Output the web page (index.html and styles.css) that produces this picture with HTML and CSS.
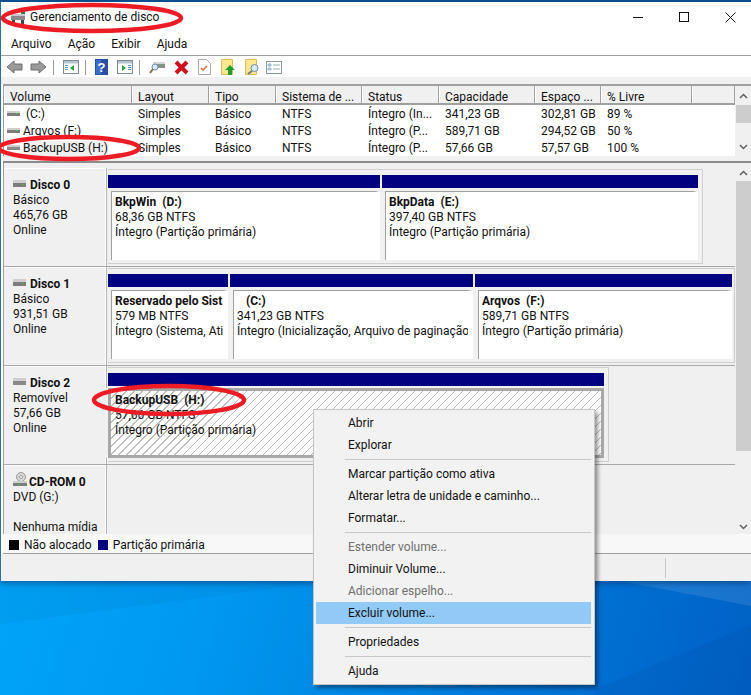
FILE: index.html
```html
<!DOCTYPE html>
<html lang="pt-BR">
<head>
<meta charset="utf-8">
<title>Gerenciamento de disco</title>
<link rel="stylesheet" href="styles.css">
</head>
<body>
<svg class="wallpaper" width="751" height="115" viewBox="0 580 751 115">
  <path d="M0 624L330 581H0z" fill="#005f9f" opacity=".08"/>
  <path d="M620 581L751 606V581z" fill="#ffffff" opacity=".1"/>
  <path d="M594 690L751 625V695H594z" fill="#00459f" opacity=".12"/>
</svg>
<div class="window">
  <header class="titlebar">
    <svg class="app-icon" width="16" height="16" viewBox="0 0 16 16"><rect x="1" y="5" width="14" height="6" fill="#8a8a8a"/><rect x="1" y="5" width="14" height="2" fill="#c8c8c8"/><rect x="2" y="11" width="3" height="4" fill="#444"/><rect x="11" y="11" width="3" height="4" fill="#444"/><rect x="11" y="2" width="4" height="3" fill="#2f7d32"/></svg>
    <span class="title">Gerenciamento de disco</span>
    <div class="controls">
      <svg width="11" height="11" viewBox="0 0 11 11"><path d="M0 5.500h10" stroke="#111" fill="none"/></svg>
      <svg width="11" height="11" viewBox="0 0 11 11"><rect x=".5" y=".5" width="9" height="9" stroke="#111" fill="none"/></svg>
      <svg width="11" height="11" viewBox="0 0 11 11"><path d="M.5.500l10 10M10.500.500l-10 10" stroke="#111" fill="none"/></svg>
    </div>
  </header>
  <nav class="menubar"><span>Arquivo</span><span>Ação</span><span>Exibir</span><span>Ajuda</span></nav>
  <div class="toolbar">
    <svg class="tool" width="17" height="16" viewBox="0 0 17 16"><path d="M1 8l7-6v3h8v6H8v3z" fill="#9a9a9a" stroke="#6e6e6e"/></svg>
    <svg class="tool gap7" width="17" height="16" viewBox="0 0 17 16"><path d="M16 8L9 2v3H1v6h8v3z" fill="#9a9a9a" stroke="#6e6e6e"/></svg>
    <i class="tsep"></i>
    <svg class="tool" width="16" height="14" viewBox="0 0 16 14"><rect x=".5" y=".5" width="15" height="13" fill="#fff" stroke="#7c8a96"/><rect x="1" y="1" width="14" height="2.500" fill="#b5c3cf"/><path d="M2 5h3v1H2zM2 7h3v1H2zM2 9h3v1H2z" fill="#5a93b8"/><path d="M11 5v6L7 8z" fill="#2fa03a"/></svg>
    <i class="tsep"></i>
    <svg class="tool" width="14" height="16" viewBox="0 0 14 16"><rect width="13" height="16" fill="#2a4fa8"/><rect x="1" y="1" width="5" height="14" fill="#3f6fd0"/><text x="6.500" y="13" text-anchor="middle" font-family="Liberation Sans" font-weight="700" font-size="13" fill="#fff">?</text></svg>
    <svg class="tool gap4" width="16" height="14" viewBox="0 0 16 14"><rect x=".5" y=".5" width="15" height="13" fill="#fff" stroke="#7c8a96"/><rect x="1" y="1" width="14" height="2.500" fill="#b5c3cf"/><path d="M11 5h3v1h-3zM11 7h3v1h-3zM11 9h3v1h-3z" fill="#5a93b8"/><path d="M5 5v6l4-3z" fill="#2fa03a"/></svg>
    <i class="tsep"></i>
    <svg class="tool" width="16" height="16" viewBox="0 0 16 16"><rect x="4" y="3" width="12" height="6" fill="#8d8d8d"/><rect x="4" y="3" width="12" height="2" fill="#d6d6d6"/><rect x="12" y="6" width="2" height="1" fill="#3c3"/><circle cx="6" cy="8" r="3" fill="#d7ecfa" stroke="#6f8fa8"/><path d="M4 10l-3 4" stroke="#8a6b4a" stroke-width="2"/></svg>
    <svg class="tool gap8" width="15" height="15" viewBox="0 0 15 15"><path d="M2 2l11 11M13 2L2 13" stroke="#d3101a" stroke-width="4"/></svg>
    <svg class="tool gap9" width="13" height="16" viewBox="0 0 13 16"><path d="M.5.500h8l4 4v11H.5z" fill="#fdfdfd" stroke="#a9a9a9"/><path d="M3 9l2 2 4-4" stroke="#e4672b" stroke-width="1.500" fill="none"/></svg>
    <svg class="tool gap10" width="14" height="16" viewBox="0 0 14 16"><path d="M.5.500h11v15H.5z" fill="#fde68e" stroke="#d9bd62"/><path d="M9 6l5 5h-3v5H7v-5H4z" fill="#1f9e2c"/></svg>
    <svg class="tool gap10" width="14" height="16" viewBox="0 0 14 16"><path d="M.5.500h11v15H.5z" fill="#fde68e" stroke="#d9bd62"/><circle cx="9.500" cy="9" r="3.500" fill="#d9eefb" stroke="#6a8ca6"/><path d="M7 12l-4 3" stroke="#7a7a7a" stroke-width="2"/></svg>
    <svg class="tool gap7" width="16" height="13" viewBox="0 0 16 13"><rect x=".5" y=".5" width="15" height="12" fill="#fff" stroke="#8c97a2"/><path d="M2 3h3v2H2zM2 7h3v2H2z" fill="#d8e7f3" stroke="#3b78ae" stroke-width=".5"/><path d="M7 4h7M7 8h7" stroke="#9aa"/></svg>
  </div>
  <div class="band"></div>

  <section class="volumes">
    <div class="table">
      <div class="row head"><span>Volume</span><span>Layout</span><span>Tipo</span><span>Sistema de ...</span><span>Status</span><span>Capacidade</span><span>Espaço ...</span><span>% Livre</span><span></span></div>
      <div class="row"><span class="vol"><svg class="hdd" width="14" height="7" viewBox="0 0 14 7"><rect y="1" width="13" height="5" fill="#7d7d7d"/><rect y="1" width="13" height="2" fill="#cfcfcf"/><rect x="9" y="3" width="2" height="1" fill="#3c3"/></svg><b> (C:)</b></span><span>Simples</span><span>Básico</span><span>NTFS</span><span>Íntegro (In...</span><span>341,23 GB</span><span>302,81 GB</span><span>89 %</span><span></span></div>
      <div class="row"><span class="vol"><svg class="hdd" width="14" height="7" viewBox="0 0 14 7"><rect y="1" width="13" height="5" fill="#7d7d7d"/><rect y="1" width="13" height="2" fill="#cfcfcf"/><rect x="9" y="3" width="2" height="1" fill="#3c3"/></svg><b>Arqvos (F:)</b></span><span>Simples</span><span>Básico</span><span>NTFS</span><span>Íntegro (P...</span><span>589,71 GB</span><span>294,52 GB</span><span>50 %</span><span></span></div>
      <div class="row"><span class="vol sel"><svg class="hdd" width="14" height="7" viewBox="0 0 14 7"><rect y="1" width="13" height="5" fill="#8a8a8a"/><rect y="1" width="13" height="2" fill="#cfcfcf"/></svg><b>BackupUSB (H:)</b></span><span>Simples</span><span>Básico</span><span>NTFS</span><span>Íntegro (P...</span><span>57,66 GB</span><span>57,57 GB</span><span>100 %</span><span></span></div>
    </div>
    <div class="scroll">
      <svg class="arrow" width="9" height="6" viewBox="0 0 9 6"><path d="M1 5l3.500-3.500L8 5" stroke="#606060" stroke-width="1.500" fill="none"/></svg>
      <div class="thumb list-thumb"></div>
      <svg class="arrow end" width="9" height="6" viewBox="0 0 9 6"><path d="M1 1l3.500 3.500L8 1" stroke="#606060" stroke-width="1.500" fill="none"/></svg>
    </div>
  </section>
  <div class="splitter"></div>

  <section class="graph">
    <div class="disks">
      <div class="disk">
        <div class="label"><h3><svg class="hdd" width="14" height="9" viewBox="0 0 14 9"><rect y="1" width="13" height="7" fill="#7d7d7d"/><rect y="1" width="13" height="3" fill="#cfcfcf"/><rect x="9" y="5" width="2" height="1" fill="#3c3"/></svg>Disco 0</h3><p>Básico</p><p>465,76 GB</p><p>Online</p></div>
        <div class="area">
          <div class="frame w595">
            <div class="part w273"><div class="bar"></div><div class="body"><strong>BkpWin  (D:)</strong><p>68,36 GB NTFS</p><p>Íntegro (Partição primária)</p></div></div>
            <div class="part w316"><div class="bar"></div><div class="body"><strong>BkpData  (E:)</strong><p>397,40 GB NTFS</p><p>Íntegro (Partição primária)</p></div></div>
          </div>
        </div>
      </div>
      <div class="disk">
        <div class="label"><h3><svg class="hdd" width="14" height="9" viewBox="0 0 14 9"><rect y="1" width="13" height="7" fill="#7d7d7d"/><rect y="1" width="13" height="3" fill="#cfcfcf"/><rect x="9" y="5" width="2" height="1" fill="#3c3"/></svg>Disco 1</h3><p>Básico</p><p>931,51 GB</p><p>Online</p></div>
        <div class="area">
          <div class="frame wfull">
            <div class="part w121"><div class="bar"></div><div class="body"><strong>Reservado pelo Sist</strong><p>579 MB NTFS</p><p>Íntegro (Sistema, Ati</p></div></div>
            <div class="part w244"><div class="bar"></div><div class="body"><strong>   (C:)</strong><p>341,23 GB NTFS</p><p>Íntegro (Inicialização, Arquivo de paginação</p></div></div>
            <div class="part w257"><div class="bar"></div><div class="body"><strong>Arqvos  (F:)</strong><p>589,71 GB NTFS</p><p>Íntegro (Partição primária)</p></div></div>
          </div>
        </div>
      </div>
      <div class="disk">
        <div class="label"><h3><svg class="hdd" width="14" height="9" viewBox="0 0 14 9"><rect y="1" width="13" height="7" fill="#8a8a8a"/><rect y="1" width="13" height="3" fill="#cfcfcf"/></svg>Disco 2</h3><p>Removível</p><p>57,66 GB</p><p>Online</p></div>
        <div class="area">
          <div class="frame w501">
            <div class="part w496"><div class="bar"></div><div class="body hatch"><strong>BackupUSB  (H:)</strong><p>57,66 GB NTFS</p><p>Íntegro (Partição primária)</p></div></div>
          </div>
        </div>
      </div>
      <div class="disk cd">
        <div class="label"><h3><svg class="hdd cdicon" width="15" height="15" viewBox="0 0 15 15"><circle cx="8" cy="5" r="4.500" fill="#d8d8d8" stroke="#9a9a9a"/><circle cx="8" cy="5" r="1.500" fill="#fff" stroke="#999"/><rect y="9" width="14" height="5" fill="#7d7d7d"/><rect y="9" width="14" height="2" fill="#cfcfcf"/><rect x="5" y="12" width="2" height="1" fill="#3c3"/></svg>CD-ROM 0</h3><p>DVD (G:)</p><p class="blank"></p><p>Nenhuma mídia</p></div>
        <div class="area"></div>
      </div>
    </div>
    <div class="scroll">
      <svg class="arrow" width="9" height="6" viewBox="0 0 9 6"><path d="M1 5l3.500-3.500L8 5" stroke="#606060" stroke-width="1.500" fill="none"/></svg>
      <div class="thumb graph-thumb"></div>
      <svg class="arrow end low" width="9" height="6" viewBox="0 0 9 6"><path d="M1 1l3.500 3.500L8 1" stroke="#606060" stroke-width="1.500" fill="none"/></svg>
    </div>
  </section>
  <div class="legend"><i class="sw black"></i><span>Não alocado</span><i class="sw navy"></i><span>Partição primária</span></div>
  <footer class="status"><i></i></footer>
</div>

<ul class="menu">
  <li>Abrir</li><li>Explorar</li><li class="sep"></li>
  <li>Marcar partição como ativa</li><li>Alterar letra de unidade e caminho...</li><li>Formatar...</li><li class="sep"></li>
  <li class="off">Estender volume...</li><li>Diminuir Volume...</li><li class="off">Adicionar espelho...</li><li class="hot">Excluir volume...</li><li class="sep"></li>
  <li>Propriedades</li><li class="sep"></li>
  <li>Ajuda</li>
</ul>

<svg class="marks" width="751" height="695" viewBox="0 0 751 695">
  <ellipse cx="92" cy="18" rx="89" ry="13" />
  <ellipse cx="69" cy="148" rx="70" ry="11" />
  <ellipse cx="169" cy="400" rx="75" ry="14" />
</svg>
</body>
</html>
```

FILE: styles.css
```css
* { box-sizing: border-box; }
html, body { margin: 0; height: 100%; }
body {
  position: relative;
  width: 751px;
  height: 695px;
  overflow: hidden;
  font: 12px/17px Roboto, "Noto Sans", sans-serif;
  color: #111;
  background: linear-gradient(108deg, #00aeff 0%, #0098f0 42%, #0074d6 78%, #0060c4 100%);
}
p, h3, ul { margin: 0; padding: 0; }
.wallpaper { position: absolute; left: 0; top: 580px; }
.window {
  position: relative;
  width: 751px;
  height: 581px;
  background: #fff;
  border-top: 2px solid #0b4f8e;
  border-left: 1px solid #2d6f9f;
  box-shadow: 0 2px 6px rgba(0, 40, 90, .55);
  display: flex;
  flex-direction: column;
}
.titlebar { height: 30px; display: flex; align-items: center; padding-left: 9px; flex: none; }
.app-icon { margin-right: 4px; }
.title { font-size: 12px; }
.controls { margin-left: auto; display: flex; gap: 35px; padding-right: 15px; align-items: center; }
.menubar { height: 22px; flex: none; display: flex; gap: 16px; padding: 1px 0 0 10px; align-items: center; border-bottom: 1px solid #a0a0a0; box-sizing: content-box; }
.toolbar { height: 21px; flex: none; display: flex; align-items: center; padding: 1px 0 0 5px; background: #fff; }
.tsep { width: 1px; height: 15px; background: #9a9a9a; margin: 0 9px 0 6px; }
.gap4 { margin-left: 8px; }
.gap7 { margin-left: 7px; }
.gap8 { margin-left: 9px; }
.gap9 { margin-left: 9px; }
.gap10 { margin-left: 10px; }
.band { height: 7px; flex: none; background: #f0f0f0; }
.volumes { height: 72px; flex: none; display: flex; border-top: 2px solid #a0a0a0; margin-left: 2px; background: #fff; border-left: 1px solid #a0a0a0; }
.table { width: 731px; flex: none; }
.row { display: grid; grid-template-columns: 128px 77px 67px 86px 77px 96px 66px 91px 43px; height: 17px; }
.row > span { padding-left: 6px; white-space: pre; overflow: hidden; line-height: 19px; }
.head { height: 19px; background: #f0f0f0; border-bottom: 2px solid #a0a0a0; }
.row.head > span { border-right: 1px solid #a0a0a0; box-shadow: inset 1px 0 #fff; line-height: 22px; }
.vol { display: flex; align-items: center; padding-left: 3px !important; }
.vol b { font-weight: 400; line-height: 15px; margin-top: 2px; }
.hdd { flex: none; margin-right: 2px; }
.sel b { background: #f0f0f0; }
.scroll { width: 16px; flex: none; background: #f0f0f0; position: relative; display: flex; flex-direction: column; align-items: center; padding-top: 7px; }
.arrow { flex: none; }
.end { margin-top: auto; margin-bottom: 6px; }
.low { margin-bottom: 4px; }
.thumb { width: 15px; background: #cdcdcd; margin-top: 6px; flex: none; }
.list-thumb { height: 18px; }
.graph-thumb { height: 270px; margin-top: 5px; }
.splitter { height: 7px; flex: none; margin-left: 2px; background: #f0f0f0; border-bottom: 2px solid #8c8c8c; }
.graph { height: 371px; flex: none; display: flex; margin-left: 2px; background: #f0f0f0; border-left: 1px solid #a0a0a0; }
.disks { width: 731px; flex: none; padding-top: 5px; }
.disk { display: flex; height: 99px; border-bottom: 1px solid #a8a8a8; }
.disk.cd { height: 69px; border-bottom: 0; }
.label { width: 102px; flex: none; padding: 8px 0 0 9px; border-top: 1px solid #fff; border-right: 1px solid #fff; }
.label h3 { font-size: 12px; font-weight: 700; display: flex; align-items: center; height: 17px; line-height: 17px; margin-bottom: -1px; }
.label .hdd { margin: -5px 3px 0 0; }
.label p { line-height: 15px; }
.label .blank { height: 15px; }
.label .cdicon { margin: -6px 1px 0 0; }
.area { flex: 1; border-left: 1px solid #b4b4b4; padding: 1px 0 0 1px; min-width: 0; }
.frame { height: 95px; display: flex; gap: 2px; padding: 5px 0 0 0; border: 1px solid #cfcfcf; border-left: 0; }
.w595 { width: 595px; }
.wfull { width: 627px; }
.w501 { width: 501px; }
.part { display: flex; flex-direction: column; flex: none; height: 85px; }
.w273 { width: 272px; }
.w316 { width: 316px; }
.w121 { width: 120px; }
.w244 { width: 243px; }
.w257 { width: 257px; }
.w496 { width: 496px; }
.bar { height: 13px; background: #000080; flex: none; }
.body { flex: 1; margin: 3px 0 0 3px; border-top: 1px solid #a0a0a0; border-left: 1px solid #a0a0a0; border-right: 5px solid #fff; background: #fff; padding: 3px 0 0 3px; overflow: hidden; white-space: pre; box-shadow: -3px 0 #f0f0f0; }
.body strong { display: block; font-weight: 700; line-height: 15px; }
.body p { line-height: 15px; }
.hatch {
  margin: 2px 0 0;
  border: 3px solid #a8a8a8;
  padding: 2px 0 0 4px;
  background: repeating-linear-gradient(135deg, #fff 0 4.900px, #bdbdbd 4.900px 5.660px);
}
.legend { height: 20px; flex: none; margin-left: 2px; display: flex; align-items: center; padding: 3px 0 0 5px; background: #f8f8f8; border-bottom: 1px solid #a0a0a0; }
.sw { width: 12px; height: 12px; flex: none; border: 1px solid #fff; margin-right: 4px; }
.black { background: #000; }
.navy { background: #000080; margin-left: 5px; }
.legend span { line-height: 17px; }
.status { flex: 1; background: #f0f0f0; display: flex; justify-content: flex-end; padding-top: 4px; }
.status i { width: 1px; height: 20px; background: #c8c8c8; margin-right: 85px; }
.menu {
  position: absolute;
  left: 313px;
  top: 409px;
  width: 282px;
  height: 276px;
  list-style: none;
  padding: 2px 3px 3px 2px;
  background: #f2f2f2;
  border: 1px solid #c4c4c4;
  box-shadow: 3px 3px 4px rgba(0,0,0,.4);
}
.menu li { height: 22px; line-height: 22px; padding-left: 32px; }
.menu .sep { height: 7px; margin: 0 0 0 29px; padding: 0; position: relative; }
.menu .sep::after { content: ""; position: absolute; left: 0; right: 0; top: 3px; height: 1px; background: #c8c8c8; }
.menu .off { color: #6f6f6f; }
.menu .hot { background: #91c9f7; }
.marks { position: absolute; left: 0; top: 0; pointer-events: none; }
.marks ellipse { fill: none; stroke: #ed1c24; stroke-width: 4.5; }
```
